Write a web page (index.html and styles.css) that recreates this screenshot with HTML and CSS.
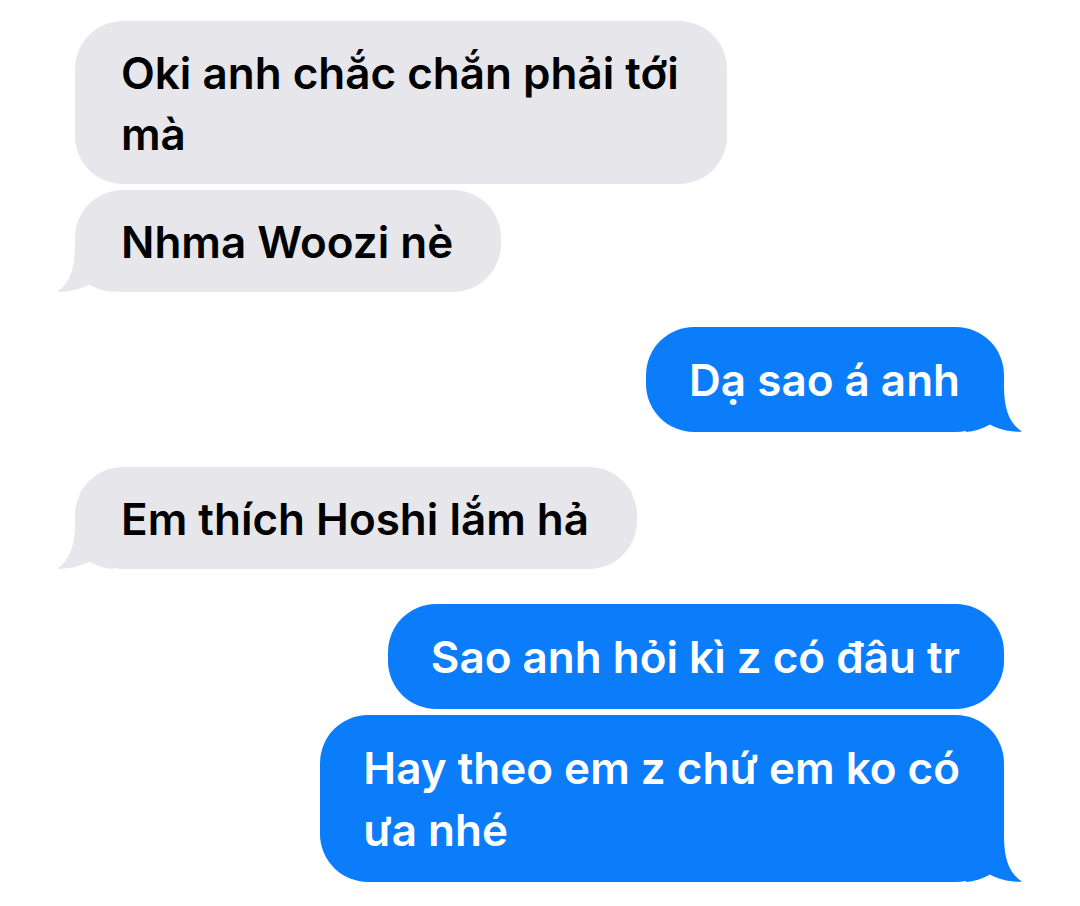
FILE: index.html
```html
<!DOCTYPE html>
<html lang="vi">
<head>
    <meta charset="UTF-8">
    <meta name="viewport" content="width=device-width, initial-scale=1.0">
    <title>Messages</title>
    <link rel="stylesheet" href="styles.css">
</head>
<body>
    <div class="chat">
        <div class="group them">
            <div class="bubble">Oki anh chắc chắn phải tới<br>mà</div>
            <div class="bubble tail">Nhma Woozi nè
                <svg class="tail-svg" viewBox="0 0 56 50" width="56" height="50"><path d="M18 4 C18 28 12 42 0 49.5 C12 50.5 24 47 32 42.5 C40 47 48 49.5 56 50 L56 18 Z"/></svg>
            </div>
        </div>

        <div class="group me">
            <div class="bubble tail">Dạ sao á anh
                <svg class="tail-svg" viewBox="0 0 56 50" width="56" height="50"><path d="M18 4 C18 28 12 42 0 49.5 C12 50.5 24 47 32 42.5 C40 47 48 49.5 56 50 L56 18 Z"/></svg>
            </div>
        </div>

        <div class="group them">
            <div class="bubble tail">Em thích Hoshi lắm hả
                <svg class="tail-svg" viewBox="0 0 56 50" width="56" height="50"><path d="M18 4 C18 28 12 42 0 49.5 C12 50.5 24 47 32 42.5 C40 47 48 49.5 56 50 L56 18 Z"/></svg>
            </div>
        </div>

        <div class="group me">
            <div class="bubble">Sao anh hỏi kì z có đâu tr</div>
            <div class="bubble tail">Hay theo em z chứ em ko có<br>ưa nhé
                <svg class="tail-svg" viewBox="0 0 56 50" width="56" height="50"><path d="M18 4 C18 28 12 42 0 49.5 C12 50.5 24 47 32 42.5 C40 47 48 49.5 56 50 L56 18 Z"/></svg>
            </div>
        </div>
    </div>
</body>
</html>
```

FILE: styles.css
```css
* {
    margin: 0;
    padding: 0;
    box-sizing: border-box;
}

body {
    font-family: 'Inter', 'Noto Sans', sans-serif;
    background: #fff;
    width: 1080px;
    height: 906px;
    overflow: hidden;
}

.chat {
    display: flex;
    flex-direction: column;
    gap: 35px;
    padding: 21px 76px 0 75px;
}

.group {
    display: flex;
    flex-direction: column;
    gap: 6px;
}

.group.them {
    align-items: flex-start;
}

.group.me {
    align-items: flex-end;
}

.bubble {
    position: relative;
    white-space: nowrap;
    padding: 22px 48px 19px 46px;
    border-radius: 48px;
    font-size: 44px;
    font-weight: 600;
    line-height: 61px;
}

.them .bubble {
    background: #e6e6eb;
    color: #000;
}

.me .bubble {
    background: #0b7dfb;
    color: #fff;
    padding: 22px 44px 21px 43px;
    line-height: 62px;
}

/* little tail at the bottom corner */
.tail-svg {
    position: absolute;
    bottom: 0;
    left: -18px;
    pointer-events: none;
}

.them .tail-svg {
    fill: #e6e6eb;
}

.me .tail-svg {
    fill: #0b7dfb;
    left: auto;
    right: -18px;
    transform: scaleX(-1);
}
```
